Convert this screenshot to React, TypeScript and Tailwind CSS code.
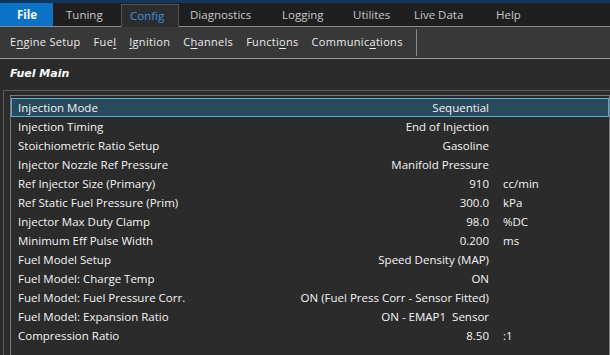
import React from "react";

const tabs = [
  { name: "File", w: "w-[53px]", pl: "pl-[17px]" },
  { name: "Tuning", w: "w-[68px]", pl: "pl-[13px]" },
  { name: "Config", w: "w-[58px]", pl: "pl-[8px]" },
  { name: "Diagnostics", w: "w-[92px]", pl: "pl-[11px]" },
  { name: "Logging", w: "w-[71px]", pl: "pl-[11px]" },
  { name: "Utilites", w: "w-[62px]", pl: "pl-[11px]" },
  { name: "Live Data", w: "w-[77px]", pl: "pl-[10px]" },
  { name: "Help", w: "w-[60px]", pl: "pl-[15px]" },
];

// [before, underlined, after]
const subItems: [string, string, string][] = [
  ["E", "n", "gine Setup"],
  ["Fue", "l", ""],
  ["", "I", "gnition"],
  ["C", "h", "annels"],
  ["Functi", "o", "ns"],
  ["Communic", "a", "tions"],
];

const rows = [
  { label: "Injection Mode", value: "Sequential", unit: "" },
  { label: "Injection Timing", value: "End of Injection", unit: "" },
  { label: "Stoichiometric Ratio Setup", value: "Gasoline", unit: "" },
  { label: "Injector Nozzle Ref Pressure", value: "Manifold Pressure", unit: "" },
  { label: "Ref Injector Size (Primary)", value: "910", unit: "cc/min" },
  { label: "Ref Static Fuel Pressure (Prim)", value: "300.0", unit: "kPa" },
  { label: "Injector Max Duty Clamp", value: "98.0", unit: "%DC" },
  { label: "Minimum Eff Pulse Width", value: "0.200", unit: "ms" },
  { label: "Fuel Model Setup", value: "Speed Density (MAP)", unit: "" },
  { label: "Fuel Model: Charge Temp", value: "ON", unit: "" },
  { label: "Fuel Model: Fuel Pressure Corr.", value: "ON (Fuel Press Corr - Sensor Fitted)", unit: "" },
  { label: "Fuel Model: Expansion Ratio", value: "ON - EMAP1\u00a0\u00a0Sensor", unit: "" },
  { label: "Compression Ratio", value: "8.50", unit: ":1" },
];

export default function App() {
  return (
    <div className="w-[610px] h-[355px] overflow-hidden bg-[#2b2b2b] flex flex-col font-['Open_Sans',sans-serif] text-[11.5px]">
      {/* top accent */}
      <div className="h-[3px] bg-[#12365c]" />

      {/* main tabs */}
      <div className="h-[24px] bg-[#1f1f1f] flex border-b border-[#8a8a8a]">
        {tabs.map((t) => {
          const file = t.name === "File";
          const active = t.name === "Config";
          return (
            <div
              key={t.name}
              className={`${t.w} ${t.pl} flex items-center whitespace-nowrap ${
                file
                  ? "bg-[#0b72c8] text-white font-bold"
                  : active
                  ? "bg-[#2d2d2d] text-[#3a8fe0] border-t border-l border-r border-[#555] mt-[1px] -mb-[1px]"
                  : "text-[#c8c8c8]"
              }`}
            >
              {t.name}
            </div>
          );
        })}
      </div>

      {/* sub menu */}
      <div className="h-[32px] bg-[#383838] flex items-center border-b border-[#9a9a9a] pl-[10px] text-[#ececec] text-[11px] tracking-[0.3px]">
        <div className="flex items-center gap-[13px]">
          {subItems.map(([a, u, b]) => (
            <span key={a + u + b} className="whitespace-nowrap">
              {a}
              <span className="underline underline-offset-2">{u}</span>
              {b}
            </span>
          ))}
        </div>
        <div className="ml-[13px] w-px h-[27px] bg-[#8a8a8a]" />
      </div>

      {/* title */}
      <div className="h-[31px] flex items-center pl-[10px] text-white font-bold italic font-['DejaVu_Sans',sans-serif] text-[11px]">
        Fuel Main
      </div>

      {/* panel */}
      <div className="flex-1 ml-[3px] border-l border-t border-[#5c5c5c] pl-[6px] pt-[4px]">
        <div className="h-full border-l border-t border-r border-[#7a7a7a] pt-[2px] text-[#f4f4f4] font-medium">
          {rows.map((r, i) => (
            <div
              key={r.label}
              className={`h-[19px] flex items-center ${
                i === 0 ? "bg-[#274a5d] border border-[#5aa8d8]" : "border border-transparent"
              }`}
            >
              <div className="w-[477px] pl-[6px] flex justify-between whitespace-nowrap">
                <span>{r.label}</span>
                <span>{r.value}</span>
              </div>
              <span className="ml-[14px]">{r.unit}</span>
            </div>
          ))}
        </div>
      </div>
    </div>
  );
}
